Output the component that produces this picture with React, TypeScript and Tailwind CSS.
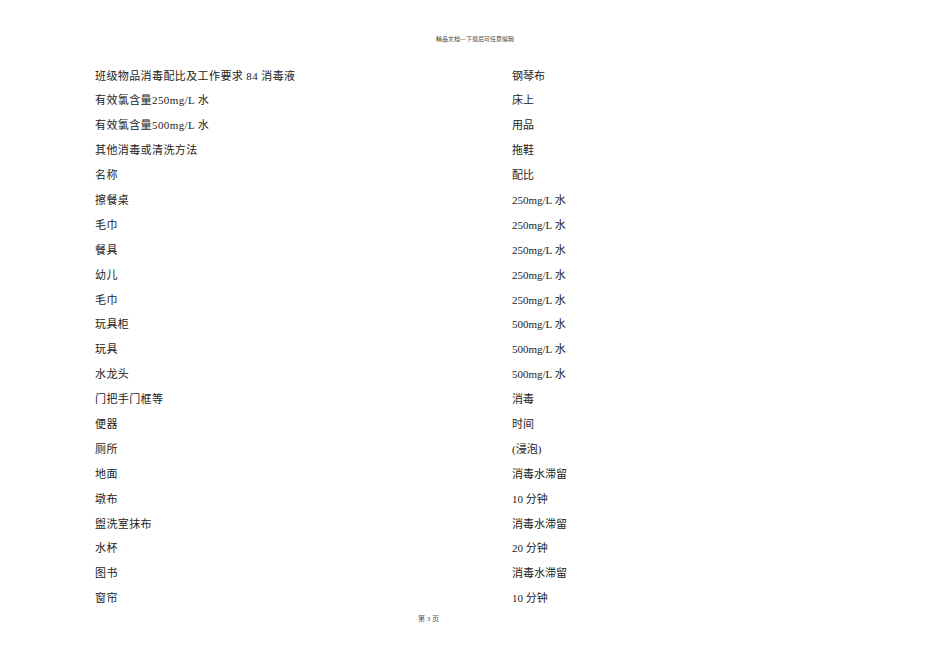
import React from "react";

const rows: [string, string][] = [
  ["班级物品消毒配比及工作要求 84 消毒液", "钢琴布"],
  ["有效氯含量250mg/L 水", "床上"],
  ["有效氯含量500mg/L 水", "用品"],
  ["其他消毒或清洗方法", "拖鞋"],
  ["名称", "配比"],
  ["擦餐桌", "250mg/L 水"],
  ["毛巾", "250mg/L 水"],
  ["餐具", "250mg/L 水"],
  ["幼儿", "250mg/L 水"],
  ["毛巾", "250mg/L 水"],
  ["玩具柜", "500mg/L 水"],
  ["玩具", "500mg/L 水"],
  ["水龙头", "500mg/L 水"],
  ["门把手门框等", "消毒"],
  ["便器", "时间"],
  ["厕所", "(浸泡)"],
  ["地面", "消毒水滞留"],
  ["墩布", "10 分钟"],
  ["盥洗室抹布", "消毒水滞留"],
  ["水杯", "20 分钟"],
  ["图书", "消毒水滞留"],
  ["窗帘", "10 分钟"],
];

export default function App() {
  return (
    <div
      className="w-[950px] h-[672px] bg-white text-black overflow-hidden"
      style={{ fontFamily: '"Liberation Serif", "Noto Sans CJK SC", serif' }}
    >
      <div className="pt-[35px] h-[43px] text-center text-[6px] leading-[8px] text-[#444]">
        精品文档---下载后可任意编辑
      </div>
      <div className="mt-[20.5px] pl-[95px] flex flex-col">
        {rows.map(([l, r], i) => (
          <div key={i} className="grid grid-cols-[417px_1fr] h-[24.9px] items-center text-[11px] leading-[24.9px] text-[#222]">
            <div className="tracking-[0.4px] whitespace-nowrap">{l}</div>
            <div className="whitespace-nowrap">{r}</div>
          </div>
        ))}
      </div>
      <div className="pt-[3px] pl-[418px] text-[7px] leading-[10px] text-[#555]">第 3 页</div>
    </div>
  );
}
